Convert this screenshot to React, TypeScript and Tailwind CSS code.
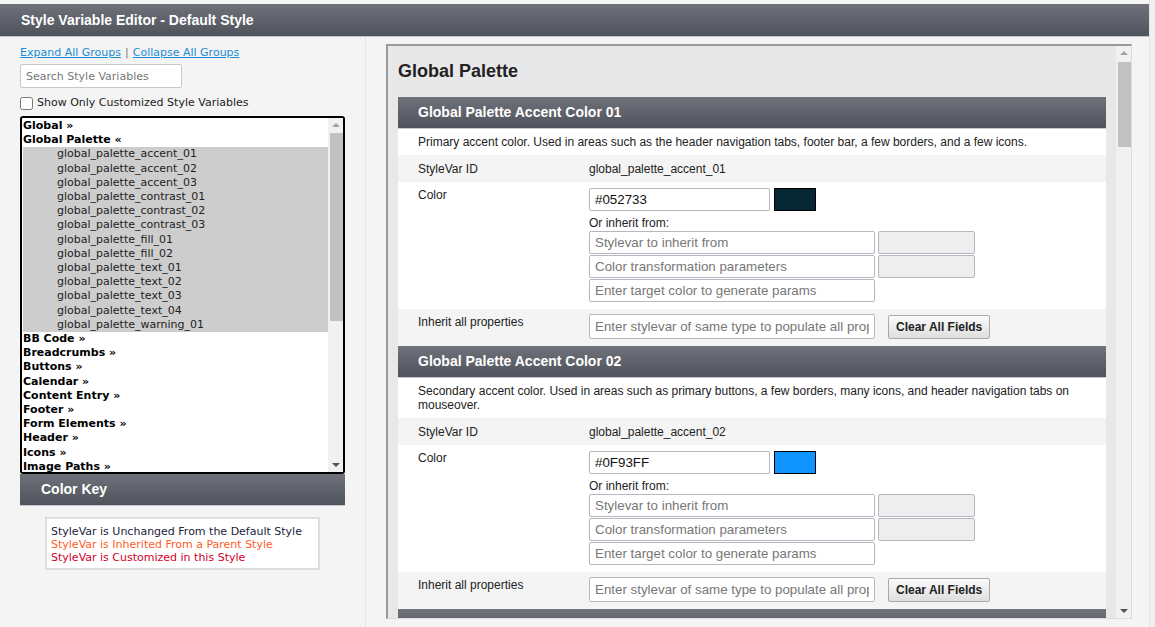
import type { ReactNode } from 'react'

const groupsBefore = ['Global']
const paletteItems = [
  'global_palette_accent_01',
  'global_palette_accent_02',
  'global_palette_accent_03',
  'global_palette_contrast_01',
  'global_palette_contrast_02',
  'global_palette_contrast_03',
  'global_palette_fill_01',
  'global_palette_fill_02',
  'global_palette_text_01',
  'global_palette_text_02',
  'global_palette_text_03',
  'global_palette_text_04',
  'global_palette_warning_01',
]
const groupsAfter = [
  'BB Code',
  'Breadcrumbs',
  'Buttons',
  'Calendar',
  'Content Entry',
  'Footer',
  'Form Elements',
  'Header',
  'Icons',
  'Image Paths',
]

const sections = [
  {
    title: 'Global Palette Accent Color 01',
    desc: 'Primary accent color. Used in areas such as the header navigation tabs, footer bar, a few borders, and a few icons.',
    id: 'global_palette_accent_01',
    value: '#052733',
    swatch: 'bg-[#052733]',
  },
  {
    title: 'Global Palette Accent Color 02',
    desc: 'Secondary accent color. Used in areas such as primary buttons, a few borders, many icons, and header navigation tabs on mouseover.',
    id: 'global_palette_accent_02',
    value: '#0F93FF',
    swatch: 'bg-[#0f93ff]',
  },
  {
    title: 'Global Palette Accent Color 03',
    desc: 'Tertiary accent color. Used in areas such as secondary buttons and a few highlights.',
    id: 'global_palette_accent_03',
    value: '#A0E0FF',
    swatch: 'bg-[#a0e0ff]',
  },
]

function DarkBar({ children, className = '' }: { children: ReactNode; className?: string }) {
  return (
    <div
      className={`h-[32px] flex items-center bg-gradient-to-b from-[#6f727a] to-[#4f535b] border-b border-[#c4c8ce] text-white font-bold text-[14px] font-['Liberation_Sans',Arial,sans-serif] ${className}`}
    >
      {children}
    </div>
  )
}

function FakeScrollbar({ thumbTop, thumbHeight }: { thumbTop: number; thumbHeight: number }) {
  return (
    <div className="relative w-[15px] h-full bg-[#f1f1f1] shrink-0">
      <div className="absolute left-1/2 -translate-x-1/2 top-[5px] w-0 h-0 border-l-[4px] border-r-[4px] border-b-[4px] border-l-transparent border-r-transparent border-b-[#a3a3a3]" />
      <div
        className="absolute left-[2px] right-0 bg-[#c1c1c1]"
        style={{ top: thumbTop, height: thumbHeight }}
      />
      <div className="absolute left-1/2 -translate-x-1/2 bottom-[5px] w-0 h-0 border-l-[4px] border-r-[4px] border-t-[4px] border-l-transparent border-r-transparent border-t-[#505050]" />
    </div>
  )
}

function TextInput({ placeholder, value, className = '' }: { placeholder?: string; value?: string; className?: string }) {
  return (
    <input
      readOnly
      placeholder={placeholder}
      defaultValue={value}
      className={`h-[23px] border border-[#b7b7bf] rounded-[2px] bg-white px-[5px] text-[13.33px] text-[#111] placeholder:text-[#777] outline-none ${className}`}
    />
  )
}

function Section({ s }: { s: (typeof sections)[number] }) {
  return (
    <div className="text-[12px] text-[#222] font-['Liberation_Sans',Arial,sans-serif]">
      <DarkBar className="pl-[20px]">{s.title}</DarkBar>
      <div className="bg-white px-[20px] py-[6px] leading-[14px]">{s.desc}</div>
      <div className="bg-[#f4f4f4] flex pl-[20px] pt-[7px] pb-[6px] leading-[14px]">
        <div className="w-[171px]">StyleVar ID</div>
        <div>{s.id}</div>
      </div>
      <div className="bg-white flex pl-[20px] pt-[6px] pb-[7px]">
        <div className="w-[171px] leading-[14px]">Color</div>
        <div>
          <div className="flex gap-[4px]">
            <TextInput value={s.value} className="w-[181px]" />
            <div className={`w-[42px] h-[23px] border border-black ${s.swatch}`} />
          </div>
          <div className="mt-[5px] leading-[14px]">Or inherit from:</div>
          <div className="mt-[1px] flex gap-[3px]">
            <div className="flex flex-col gap-[1px]">
              <TextInput placeholder="Stylevar to inherit from" className="w-[286px]" />
              <TextInput placeholder="Color transformation parameters" className="w-[286px]" />
              <TextInput placeholder="Enter target color to generate params" className="w-[286px]" />
            </div>
            <div className="flex flex-col gap-[1px]">
              <div className="w-[97px] h-[23px] bg-[#eeeeee] border border-[#b7b7bf] rounded-[2px]" />
              <div className="w-[97px] h-[23px] bg-[#eeeeee] border border-[#b7b7bf] rounded-[2px]" />
            </div>
          </div>
        </div>
      </div>
      <div className="bg-[#f4f4f4] flex pl-[20px] pt-[5px] pb-[7px]">
        <div className="w-[171px] leading-[14px] pt-[1px]">Inherit all properties</div>
        <div className="flex gap-[13px]">
          <TextInput placeholder="Enter stylevar of same type to populate all properties" className="w-[286px] h-[25px]" />
          <button className="h-[24px] px-[7px] mt-[1px] border border-[#a9a9a9] rounded-[2px] bg-gradient-to-b from-[#fbfbfb] to-[#dedede] text-[12px] font-bold text-[#222]">
            Clear All Fields
          </button>
        </div>
      </div>
    </div>
  )
}

export default function App() {
  return (
    <div className="w-full h-[627px] bg-[#f0f0f0] overflow-hidden">
      <div className="w-[1150px] h-[627px] bg-[#f4f4f4] border-r border-[#e2e2e2] pt-[4px] flex flex-col">
        <DarkBar className="pl-[21px] h-[33px]">Style Variable Editor - Default Style</DarkBar>

        <div className="flex flex-1 min-h-0">
          {/* left column */}
          <div className="w-[366px] border-r border-[#e4e4e4] pl-[20px] pt-[9px] font-['DejaVu_Sans',Verdana,sans-serif] text-[11px] text-[#222] shrink-0">
            <div className="leading-[14px]">
              <a className="text-[#1a8cd8] underline" href="#">Expand All Groups</a>
              <span className="text-[#777] mx-[4px]">|</span>
              <a className="text-[#1a8cd8] underline" href="#">Collapse All Groups</a>
            </div>
            <input
              readOnly
              placeholder="Search Style Variables"
              className="mt-[4px] w-[162px] h-[24px] border border-[#c8c8c8] rounded-[2px] bg-white px-[5px] text-[11px] placeholder:text-[#777] outline-none"
            />
            <label className="mt-[8px] flex items-center gap-[4px] leading-[14px]">
              <input type="checkbox" className="w-[13px] h-[13px] m-0" />
              Show Only Customized Style Variables
            </label>

            <div className="mt-[6px] w-[325px] h-[358px] border-2 border-black rounded-[3px] bg-white flex overflow-hidden">
              <div className="flex-1 pl-[1px] pt-[1px] leading-[14.2px] overflow-hidden">
                {groupsBefore.map((g) => (
                  <div key={g} className="font-bold text-black">{g} »</div>
                ))}
                <div className="font-bold text-black">Global Palette «</div>
                <div className="bg-[#cdcdcd]">
                  {paletteItems.map((it) => (
                    <div key={it} className="pl-[34px]">{it}</div>
                  ))}
                </div>
                {groupsAfter.map((g) => (
                  <div key={g} className="font-bold text-black">{g} »</div>
                ))}
              </div>
              <FakeScrollbar thumbTop={15} thumbHeight={188} />
            </div>

            <DarkBar className="w-[325px] pl-[21px]">Color Key</DarkBar>

            <div className="ml-[25px] mt-[11px] w-[275px] border-2 border-[#dedede] bg-white px-[4px] pt-[6px] pb-[4px] leading-[13px]">
              <div className="text-[#222240]">StyleVar is Unchanged From the Default Style</div>
              <div className="text-[#ff5c1f]">StyleVar is Inherited From a Parent Style</div>
              <div className="text-[#d1002b]">StyleVar is Customized in this Style</div>
            </div>
          </div>

          {/* right column */}
          <div className="flex-1 pl-[20px] pr-[17px] pt-[7px] pb-[8px] min-w-0">
            <div className="h-full border-t-2 border-l-2 border-[#9a9a9a] border-r border-r-[#dcdcdc] border-b border-b-[#dcdcdc] bg-[#e8e8e8] flex">
              <div className="flex-1 px-[10px] overflow-hidden min-w-0">
                <div className="pt-[13px] mb-[14px] text-[18px] leading-[24px] font-bold text-[#222] font-['Liberation_Sans',Arial,sans-serif]">
                  Global Palette
                </div>
                {sections.map((s) => (
                  <Section key={s.id} s={s} />
                ))}
              </div>
              <FakeScrollbar thumbTop={16} thumbHeight={85} />
            </div>
          </div>
        </div>
      </div>
    </div>
  )
}
